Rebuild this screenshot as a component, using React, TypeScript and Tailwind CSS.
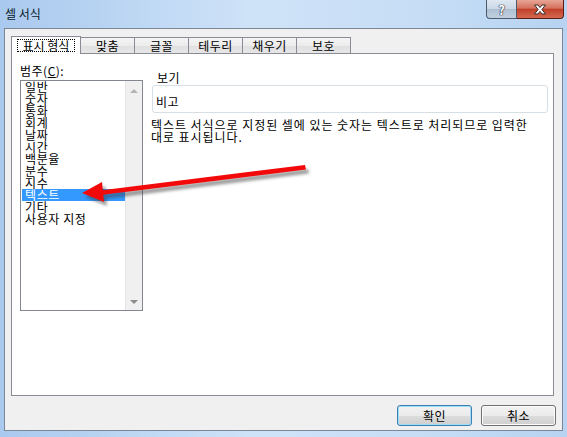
import React from "react";

const tabs = ["표시 형식", "맞춤", "글꼴", "테두리", "채우기", "보호"];

const categories = [
  "일반",
  "숫자",
  "통화",
  "회계",
  "날짜",
  "시간",
  "백분율",
  "분수",
  "지수",
  "텍스트",
  "기타",
  "사용자 지정",
];

const CloseGlyph = () => (
  <svg width="14" height="11" viewBox="0 0 14 11">
    <path
      d="M1.5 1 H5 L7 3.6 L9 1 H12.5 L8.9 5.5 L12.5 10 H9 L7 7.4 L5 10 H1.5 L5.1 5.5 Z"
      fill="#fff"
      stroke="#3a2a2a"
      strokeWidth="1"
      strokeLinejoin="round"
    />
  </svg>
);

const RedArrow = () => (
  <svg
    className="absolute left-0 top-0 pointer-events-none"
    width="567"
    height="437"
    viewBox="0 0 567 437"
  >
    <defs>
      <filter id="arrow-shadow" x="-10%" y="-50%" width="120%" height="200%">
        <feGaussianBlur stdDeviation="1.6" />
      </filter>
    </defs>
    <g transform="translate(3 4)" filter="url(#arrow-shadow)" fill="#3a3a3a" opacity="0.5">
      <polygon points="82,193 102,182 104,202" />
      <polygon points="100,190.5 305,165 306,169.5 101,195" />
    </g>
    <g fill="#f20a0a">
      <polygon points="82,193 102,182 104,202" />
      <polygon points="100,190.5 305,165 306,169.5 101,195" />
    </g>
  </svg>
);

export default function App() {
  return (
    <div className="relative w-[567px] h-[437px] overflow-hidden bg-[linear-gradient(to_right,#a9c9ee,#cfe3f8_45%,#c6ddf5_75%,#b7d3f1)] font-['Noto_Sans_CJK_KR','Noto_Sans',sans-serif] text-[12px] text-black">
      {/* title bar */}
      <div className="flex h-[28px] items-start justify-between">
        <div className="pl-[5px] pt-[7px] leading-[14px] text-[#0a1a2a]">셀 서식</div>
        <div className="flex mr-[3px]">
          <div className="flex h-[19px] w-[31px] items-center justify-center rounded-bl-[4px] border border-t-0 border-[#4c5a6c] bg-[linear-gradient(to_bottom,#dfe8f2,#c9d6e4_50%,#aebfd2_51%,#c0d0e0)]">
            <span className="text-[13px] font-bold leading-none text-white [text-shadow:0_0_1px_#223,0_0_1px_#223,0_0_1px_#223]">
              ?
            </span>
          </div>
          <div className="flex h-[19px] w-[47px] items-center justify-center rounded-br-[4px] border border-l-0 border-t-0 border-[#5a1e16] bg-[linear-gradient(to_bottom,#e8a595,#d4725e_45%,#c2402a_52%,#d46a50)]">
            <CloseGlyph />
          </div>
        </div>
      </div>

      {/* client area */}
      <div className="ml-[4px] h-[403px] w-[559px] border border-[#7b8696] bg-[#f0f0f0]">
        {/* tab strip */}
        <div className="mt-[7px] flex h-[17px] items-end pl-[6px]">
          {tabs.map((t, i) =>
            i === 0 ? (
              <div
                key={t}
                className="relative z-10 -mb-px flex h-[18px] w-[70px] items-center justify-center border border-b-0 border-[#898c95] bg-white"
              >
                <span className="flex h-[13px] items-center border border-dotted border-black px-[5px] leading-[11px]">
                  {t}
                </span>
              </div>
            ) : (
              <div
                key={t}
                className="-ml-px flex h-[16px] w-[55px] items-center justify-center border border-b-0 border-[#898c95] bg-[linear-gradient(to_bottom,#f4f4f4,#ececec_50%,#e0e0e0_51%,#e6e6e6)] leading-[12px] tracking-[0.5px]"
              >
                {t}
              </div>
            )
          )}
        </div>

        {/* tab panel */}
        <div className="ml-[6px] flex h-[343px] w-[543px] border border-[#898c95] bg-white">
          <div className="ml-[8px] flex flex-col">
            <div className="mt-[11px] h-[12px] leading-[12px] tracking-[0.5px]">
              범주(<span className="underline underline-offset-1">C</span>):
            </div>
            <div className="mt-[3px] flex h-[231px] w-[123px] border border-[#828790] bg-white">
              <div className="flex-1 pl-px">
                {categories.map((c) =>
                  c === "텍스트" ? (
                    <div
                      key={c}
                      className="h-[12px] whitespace-nowrap bg-[#3399ff] pl-[3px] leading-[12px] tracking-[0.6px] text-white"
                    >
                      {c}
                    </div>
                  ) : (
                    <div key={c} className="h-[12px] whitespace-nowrap pl-[3px] leading-[12px] tracking-[0.6px]">
                      {c}
                    </div>
                  )
                )}
              </div>
              <div className="flex w-[17px] flex-col items-center justify-between border-l border-[#e4e4e4] bg-[#f0f0f0] pb-[6px] pt-[8px]">
                <div className="h-0 w-0 border-x-[4px] border-b-[4px] border-x-transparent border-b-[#b4b4b4]" />
                <div className="h-0 w-0 border-x-[4px] border-t-[4px] border-x-transparent border-t-[#8c8c8c]" />
              </div>
            </div>
          </div>

          <div className="ml-[8px] flex flex-col">
            <div className="relative ml-px mt-[31px] h-[28px] w-[396px] rounded-[3px] border border-[#d5dfe5]">
              <div className="absolute left-[3px] top-[-14px] bg-white px-px leading-[12px] tracking-[0.5px]">보기</div>
              <div className="pl-[3px] pt-[10px] leading-[12px] tracking-[0.5px]">비고</div>
            </div>
            <div className="mt-[6px] whitespace-nowrap leading-[12px] tracking-[0.95px]">
              텍스트 서식으로 지정된 셀에 있는 숫자는 텍스트로 처리되므로 입력한
              <br />
              대로 표시됩니다.
            </div>
          </div>
        </div>

        {/* buttons */}
        <div className="mt-[9px] flex justify-end gap-[9px] pr-[6px]">
          <button className="h-[21px] w-[75px] rounded-[3px] border border-[#3c7fb1] bg-[linear-gradient(to_bottom,#f2f2f2,#ebebeb_50%,#dddddd_51%,#cfcfcf)] leading-[12px] tracking-[0.5px] shadow-[inset_0_0_0_1px_#9fdcf7]">
            확인
          </button>
          <button className="h-[21px] w-[75px] rounded-[3px] border border-[#707070] bg-[linear-gradient(to_bottom,#f2f2f2,#ebebeb_50%,#dddddd_51%,#cfcfcf)] leading-[12px] tracking-[0.5px] shadow-[inset_0_0_0_1px_#fcfcfc]">
            취소
          </button>
        </div>
      </div>

      <RedArrow />
    </div>
  );
}
